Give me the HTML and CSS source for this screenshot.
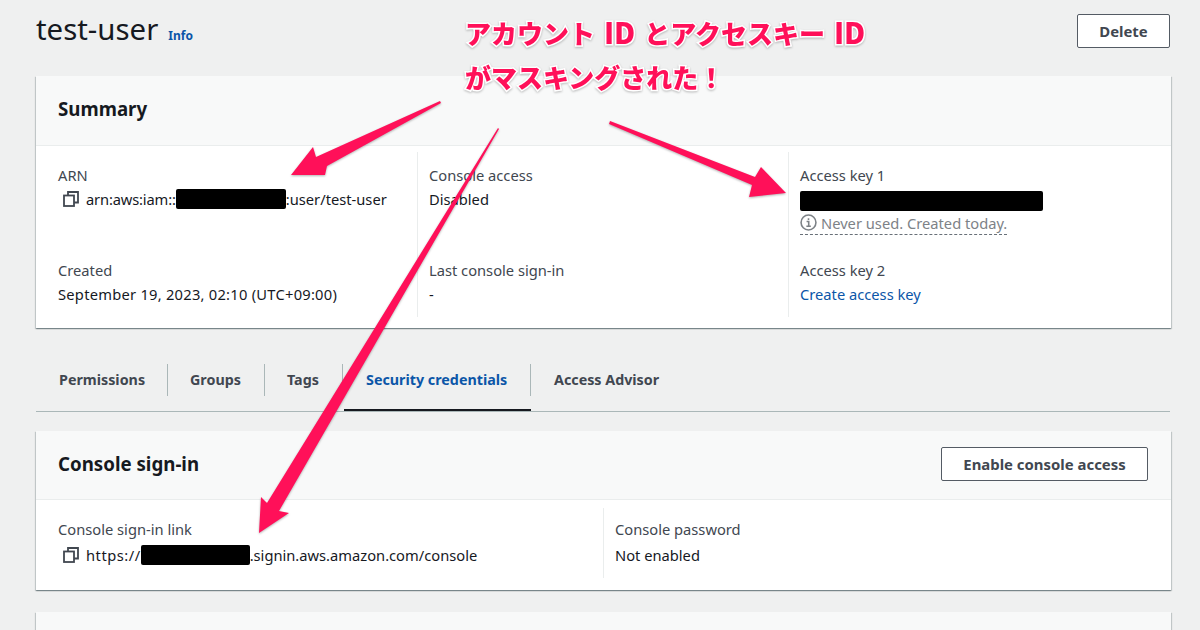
FILE: index.html
```html
<!DOCTYPE html>
<html lang="ja">
<head>
<meta charset="utf-8">
<title>test-user</title>
<link rel="stylesheet" href="styles.css">
</head>
<body>
<div class="page">
  <header class="page-head">
    <div class="title-group"><h1>test-user</h1><a class="info">Info</a></div>
    <button class="btn btn-delete">Delete</button>
  </header>

  <section class="card summary">
    <div class="card-head"><h2>Summary</h2></div>
    <div class="summary-grid">
      <div class="col">
        <div class="item">
          <div class="label">ARN</div>
          <div class="value copy">
            <svg class="copy-icon" viewBox="0 0 16 16"><rect x="1" y="4.5" width="10" height="10.5"/><path d="M5 4.5V1h10v10.5h-4"/></svg>
            <span class="arn">arn:aws:iam::</span><span class="mask mask-short"></span><span>:user/test-user</span>
          </div>
        </div>
        <div class="item">
          <div class="label">Created</div>
          <div class="value date">September 19, 2023, 02:10 (UTC+09:00)</div>
        </div>
      </div>
      <div class="col">
        <div class="item">
          <div class="label">Console access</div>
          <div class="value">Disabled</div>
        </div>
        <div class="item">
          <div class="label">Last console sign-in</div>
          <div class="value">-</div>
        </div>
      </div>
      <div class="col">
        <div class="item">
          <div class="label">Access key 1</div>
          <div class="value"><span class="mask mask-long"></span></div>
          <div class="status"><svg class="info-icon" viewBox="0 0 16 16"><circle cx="8" cy="8" r="7"/><path d="M6.2 7h2v4.4M6 11.5h4.2M8 4v1.6"/></svg>Never used. Created today.</div>
        </div>
        <div class="item">
          <div class="label">Access key 2</div>
          <div class="value"><a class="link">Create access key</a></div>
        </div>
      </div>
    </div>
  </section>

  <nav class="tabs">
    <a class="tab tab-perm">Permissions</a>
    <a class="tab tab-groups">Groups</a>
    <a class="tab tab-tags">Tags</a>
    <a class="tab tab-sec active">Security credentials</a>
    <a class="tab tab-adv">Access Advisor</a>
  </nav>

  <section class="card signin">
    <div class="card-head signin-head">
      <h2>Console sign-in</h2>
      <button class="btn btn-enable">Enable console access</button>
    </div>
    <div class="signin-grid">
      <div class="signin-col">
        <div class="label">Console sign-in link</div>
        <div class="value copy signin-value">
          <svg class="copy-icon" viewBox="0 0 16 16"><rect x="1" y="4.5" width="10" height="10.5"/><path d="M5 4.5V1h10v10.5h-4"/></svg>
          <span class="https">https://</span><span class="mask mask-signin"></span><span>.signin.aws.amazon.com/console</span>
        </div>
      </div>
      <div class="signin-col">
        <div class="label">Console password</div>
        <div class="value signin-value">Not enabled</div>
      </div>
    </div>
  </section>

  <section class="card next"></section>
</div>

<svg class="arrows" viewBox="0 0 1200 630">
  <polygon points="440,101 441,103 327,166 325,175 291,175 313,147 316,157"/>
  <polygon points="610,121 609,124 752,185 749,197 786,193 761,167 755,177"/>
  <polygon points="498,128 499,129 279,511 289,513 259,533 261,497 267,503"/>
</svg>
<div class="note">
  <p>アカウント <span class="latin">ID</span> とアクセスキー <span class="latin">ID</span></p>
  <p>がマスキングされた！</p>
</div>
</body>
</html>
```
FILE: styles.css
```css
* { box-sizing: border-box; }
html, body { margin: 0; height: 630px; overflow: hidden; }
body {
  position: relative;
  background: #eff0f0;
  color: #16191f;
  font-family: "Noto Sans", "Noto Sans CJK JP", sans-serif;
  font-size: 14.7px;
  line-height: 24px;
}
.page { width: 1135px; height: 630px; margin-left: 36px; overflow: visible; }

.page-head {
  height: 76px;
  padding-top: 12px;
  display: flex;
  justify-content: space-between;
  align-items: flex-start;
}
.title-group { display: flex; align-items: baseline; gap: 10px; }
h1 { margin: 0; font-size: 29.4px; font-weight: 400; line-height: 34px; color: #16191f; }
.info { font-size: 12px; font-weight: 700; color: #0b56a8; }
.btn {
  font-family: inherit;
  font-size: 14.9px;
  font-weight: 700;
  color: #414750;
  height: 34px;
  background: #fff;
  border: 1px solid #545b64;
  border-radius: 2px;
  padding: 0;
}
.btn-delete { width: 93px; margin-top: 2px; margin-right: 1px; }
.btn-enable { width: 207px; }

.card {
  background: #fff;
  box-shadow: 0 1px 1px 0 rgba(0,28,36,.3), 1px 1px 1px 0 rgba(0,28,36,.15), -1px 1px 1px 0 rgba(0,28,36,.15);
}
.card-head {
  height: 70px;
  background: #f8f9f9;
  border-bottom: 1px solid #eaeded;
  padding: 0 22px 4px;
  display: flex;
  align-items: center;
}
h2 { margin: 0; font-size: 18.7px; font-weight: 700; color: #16191f; line-height: 24px; }

.summary { height: 252px; }
.summary-grid {
  display: grid;
  grid-template-columns: 381px 371px 1fr;
  padding: 6px 0 11px;
  height: 182px;
}
.col { padding: 11px 11px 0; }
.col:first-child { padding-left: 22px; }
.col + .col { border-left: 1px solid #eaeded; }
.item { height: 95px; }
.item + .item { height: auto; }
.label { color: #414750; }
.value { color: #16191f; }
.date { letter-spacing: .25px; }
.arn { letter-spacing: -.15px; }
.https { letter-spacing: .5px; }
.copy { display: flex; align-items: center; }
.copy-icon {
  width: 16px; height: 16px;
  margin: 0 7px 0 5px;
  fill: none; stroke: #414750; stroke-width: 1.8;
  flex: none;
}
.mask {
  display: inline-block;
  height: 20px;
  background: #000;
  border-radius: 2px;
  vertical-align: middle;
}
.mask-short { width: 110px; }
.mask-signin { width: 109px; }
.mask-long { width: 243px; }
.status {
  display: inline-flex;
  align-items: center;
  gap: 4px;
  color: #7d8287;
  border-bottom: 1px dashed #687078;
  height: 24px;
}
.info-icon {
  width: 17px; height: 17px;
  fill: none; stroke: #7d8287; stroke-width: 1.5;
}
.link { color: #0b56a8; }

.tabs {
  display: flex;
  align-items: flex-start;
  width: 1134px;
  height: 84px;
  padding-top: 36px;
  border-bottom: 1px solid #aab7b8;
  margin-bottom: 19px;
}
.tab {
  position: relative;
  height: 47px;
  padding-top: 4px;
  font-size: 14.3px;
  font-weight: 700;
  color: #414750;
}
.tab::after {
  content: "";
  position: absolute;
  right: 0; top: 0;
  width: 1px; height: 32px;
  background: #aab7b8;
}
.tab-perm { width: 132px; padding-left: 23px; }
.tab-groups { width: 97px; padding-left: 22px; }
.tab-tags { width: 78px; padding-left: 22px; }
.tab-sec { width: 188px; padding-left: 23px; }
.tab-adv { padding-left: 23px; }
.tab-adv::after { display: none; }
.tab.active { color: #0b56a8; }
.tab.active::before {
  content: "";
  position: absolute;
  left: 1px; right: 0; bottom: 0;
  height: 2px;
  background: #16191f;
}

.signin { height: 159px; margin-bottom: 22px; }
.signin-head { justify-content: space-between; height: 69px; padding-right: 23px; padding-bottom: 2px; }
.signin-grid {
  display: grid;
  grid-template-columns: 567px 1fr;
  padding: 8px 0 12px;
  height: 90px;
}
.signin-col { padding: 9px 11px 0; }
.signin-col:first-child { padding-left: 22px; }
.signin-col + .signin-col { border-left: 1px solid #eaeded; }
.signin-value { margin-top: 2px; }

.next { height: 18px; background: #f8f9f9; }

.arrows {
  position: absolute;
  left: 0; top: 0;
  width: 1200px; height: 630px;
  pointer-events: none;
  filter: drop-shadow(0 1px 1px rgba(0,0,0,.3));
}
.arrows polygon { fill: #ff1059; }
.note {
  position: absolute;
  left: 465px; top: 9px;
  font-family: "Noto Sans CJK JP", sans-serif;
  font-size: 26px;
  font-weight: 900;
  line-height: 44px;
  word-spacing: 3px;
  color: #ff1059;
  -webkit-text-stroke: 3px #fff;
  paint-order: stroke fill;
  filter: drop-shadow(0 1px 1px rgba(0,0,0,.25));
  white-space: nowrap;
}
.note p { margin: 0; }
.latin { font-size: 29px; }
```
